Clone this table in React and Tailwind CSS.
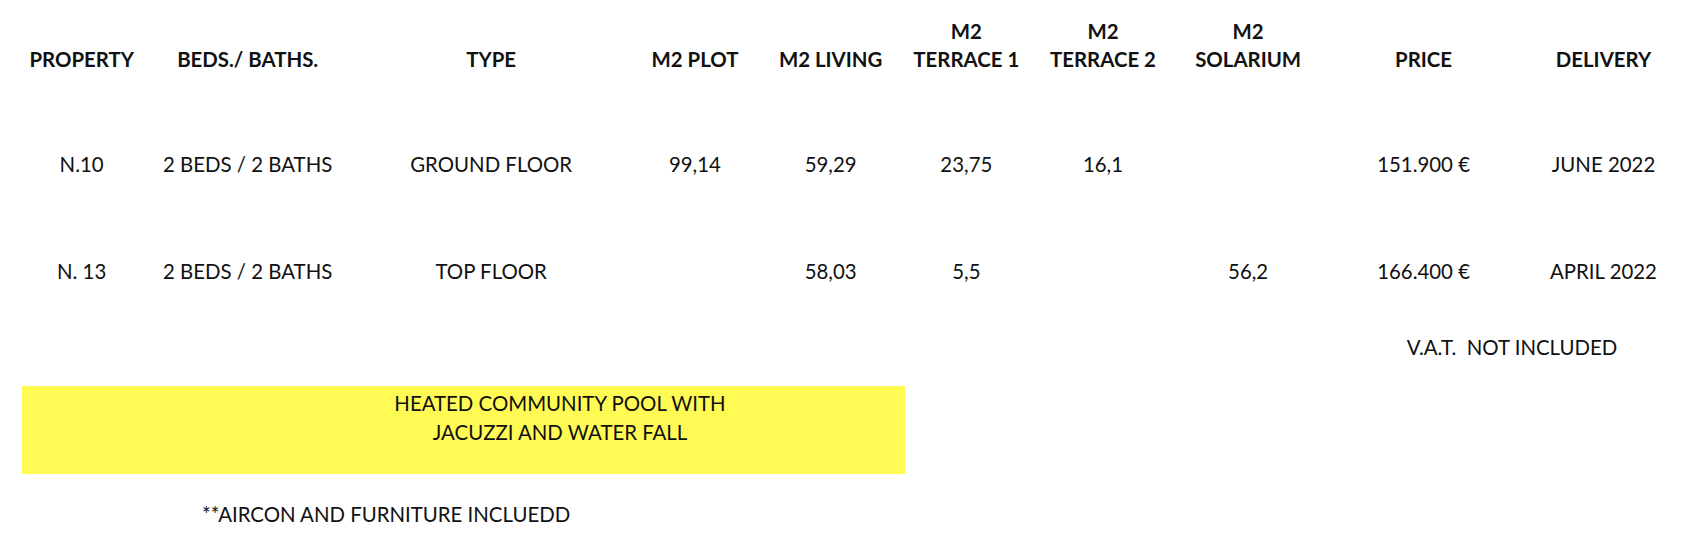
import React from "react";

const cols = [
  "w-[120px]",
  "w-[214px]",
  "w-[276px]",
  "w-[134px]",
  "w-[139px]",
  "w-[134px]",
  "w-[141px]",
  "w-[151px]",
  "w-[202px]",
  "w-[160px]",
];

const headers = [
  ["PROPERTY"],
  ["BEDS./ BATHS."],
  ["TYPE"],
  ["M2 PLOT"],
  ["M2 LIVING"],
  ["M2", "TERRACE 1"],
  ["M2", "TERRACE 2"],
  ["M2", "SOLARIUM"],
  ["PRICE"],
  ["DELIVERY"],
];

const rows = [
  ["N.10", "2 BEDS / 2 BATHS", "GROUND FLOOR", "99,14", "59,29", "23,75", "16,1", "", "151.900 €", "JUNE 2022"],
  ["N. 13", "2 BEDS / 2 BATHS", "TOP FLOOR", "", "58,03", "5,5", "", "56,2", "166.400 €", "APRIL 2022"],
];

const App = () => {
  return (
    <div
      className="w-[1683px] h-[534px] overflow-hidden bg-white pl-[22px] text-[#111] text-[20.4px] leading-[28px]"
      style={{ fontFamily: "Lato, 'Open Sans', sans-serif" }}
    >
      {/* header */}
      <div className="flex h-[110px] pt-[17px] font-bold">
        {headers.map((lines, i) => (
          <div key={i} className={`${cols[i]} h-[56px] flex flex-col justify-end items-center whitespace-nowrap`}>
            {lines.map((l) => (
              <div key={l} className="flex justify-center">{l}</div>
            ))}
          </div>
        ))}
      </div>

      {rows.map((row, r) => (
        <div key={r} className="flex h-[107px] items-center">
          {row.map((cell, i) => (
            <div key={i} className={`${cols[i]} flex justify-center whitespace-nowrap`}>
              {cell}
            </div>
          ))}
        </div>
      ))}

      <div className="mt-[9px] ml-[1305px] w-[370px] text-center whitespace-pre">V.A.T.  NOT INCLUDED</div>

      <div className="mt-[25px] w-[883px] h-[88px] bg-[#fffb54] pt-[3px]">
        <div className="ml-[338px] w-[400px] text-center leading-[29px]">
          <div>HEATED COMMUNITY POOL WITH</div>
          <div>JACUZZI AND WATER FALL</div>
        </div>
      </div>

      <div className="mt-[26px] ml-[180px] whitespace-nowrap">**AIRCON AND FURNITURE INCLUEDD</div>
    </div>
  );
};

export default App;
